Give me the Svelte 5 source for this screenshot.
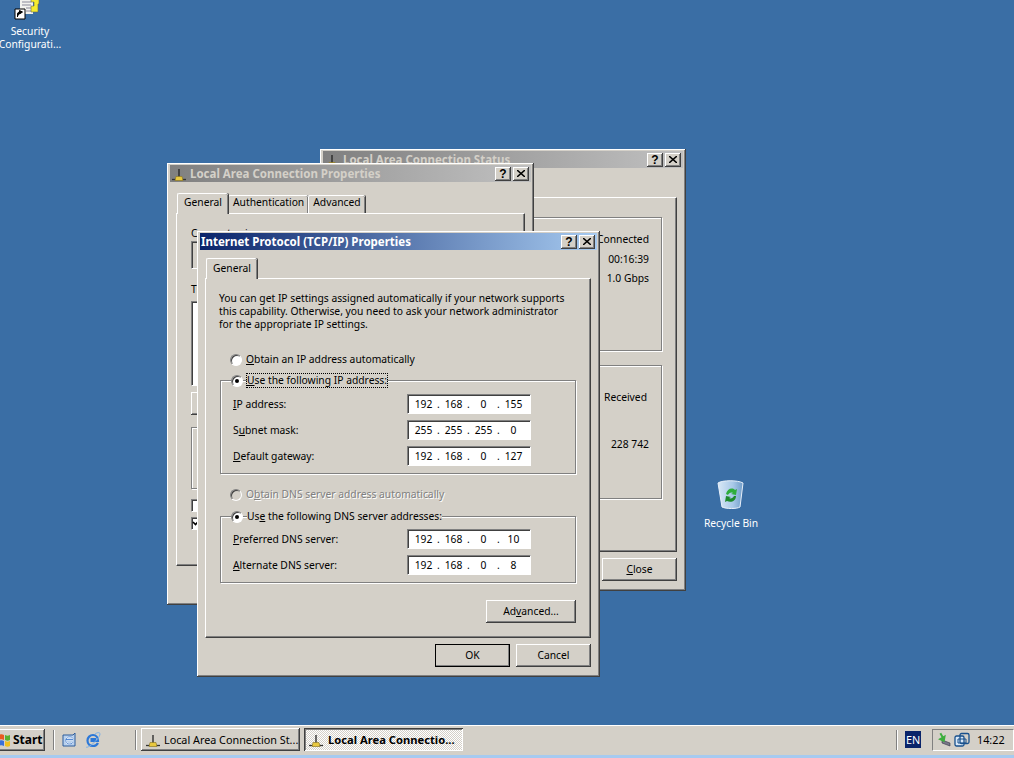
<script>
	const ipGroup = [
		{ key: 'I', rest: 'P address:', parts: ['192', '168', '0', '155'] },
		{ before: 'S', key: 'u', rest: 'bnet mask:', parts: ['255', '255', '255', '0'] },
		{ key: 'D', rest: 'efault gateway:', parts: ['192', '168', '0', '127'] }
	];
	const dnsGroup = [
		{ key: 'P', rest: 'referred DNS server:', parts: ['192', '168', '0', '10'] },
		{ key: 'A', rest: 'lternate DNS server:', parts: ['192', '168', '0', '8'] }
	];
</script>

{#snippet netIcon()}
	<svg class="net" viewBox="0 0 16 16" width="16" height="16">
		<path d="M8 3v8" stroke="#222" stroke-width="1.300" />
		<path d="M1 13.500h14" stroke="#333" stroke-width="1.300" />
		<path d="M5 10.500h6l1 4H4z" fill="#e8c840" stroke="#8a7420" stroke-width=".6" />
	</svg>
{/snippet}

{#snippet controls()}
	<div class="controls">
		<span class="ctl">?</span>
		<span class="ctl close">
			<svg viewBox="0 0 8 7" width="8" height="7"><path d="M0 0l8 7M8 0L0 7" stroke="#000" stroke-width="1.500" /></svg>
		</span>
	</div>
{/snippet}

{#snippet radio(checked, disabled)}
	<span class="radio" class:disabled>
		{#if checked}<span class="dot"></span>{/if}
	</span>
{/snippet}

{#snippet ipRows(rows)}
	{#each rows as row}
		<div class="ip-row">
			<span class="ip-label">{row.before ?? ''}<u>{row.key}</u>{row.rest}</span>
			<div class="ip-field">
				{#each row.parts as part, i}
					<span class="octet">{part}</span>{#if i < 3}<span class="sep">.</span>{/if}
				{/each}
			</div>
		</div>
	{/each}
{/snippet}

<div class="screen">
	<div class="desktop">
		<div class="desk-icon security">
			<svg viewBox="0 0 32 32" width="32" height="32">
				<path d="M6 0h13v24H6z" fill="#f2f2ee" />
				<path d="M8 12h9M8 15h9M12 18h6M12 21h6" stroke="#8a8a9a" />
				<path d="M17 6h8v8h-1v8h-7v-6h3v-4h-3z" fill="#f4ec30" stroke="#665" stroke-width=".6" />
				<path d="M1 19h10v10H1z" fill="#fff" stroke="#000" />
				<path d="M3.500 27v-3c0-1.500 1-2 3-2M5.500 20.500l3 1.500-3 2z" fill="#000" stroke="#000" />
			</svg>
			<span>Security<br />Configurati...</span>
		</div>

		<div class="desk-icon recycle">
			<svg viewBox="0 0 32 32" width="32" height="32">
				<defs>
					<linearGradient id="binGrad" x1="0" x2="1">
						<stop offset="0" stop-color="#d8e8f6" />
						<stop offset=".6" stop-color="#a8c8e8" />
						<stop offset="1" stop-color="#6f9cc8" />
					</linearGradient>
				</defs>
				<path d="M3 4c4-3 20-3 25 0l-3 24c-3 2-14 2-18 0z" fill="url(#binGrad)" stroke="#e8f0fa" />
				<path d="M11 15c1-5 6-7 9-4l2-1-1 6-5-1 2-1c-2-1-4 0-5 2z" fill="#2fae3c" />
				<path d="M21 17c0 5-5 7-9 5l-2 1 1-6 5 1-2 1c2 1 4 0 5-2z" fill="#1e8a2c" />
			</svg>
			<span>Recycle Bin</span>
		</div>

		<!-- status dialog, mostly covered -->
		<section class="window status">
			<header class="title inactive">
				{@render netIcon()}
				<span class="title-text">Local Area Connection Status</span>
				{@render controls()}
			</header>
			<div class="status-body">
				<div class="panel status-panel">
					<fieldset class="etched status-group first">
						<p class="status-line">Connected</p>
						<p class="status-line">00:16:39</p>
						<p class="status-line">1.0 Gbps</p>
					</fieldset>
					<fieldset class="etched status-group second">
						<p class="received">Received</p>
						<p class="bytes">228 742</p>
					</fieldset>
				</div>
				<div class="status-foot">
					<button class="btn close-btn"><u>C</u>lose</button>
				</div>
			</div>
		</section>

		<!-- properties dialog, mostly covered -->
		<section class="window props">
			<header class="title inactive">
				{@render netIcon()}
				<span class="title-text">Local Area Connection Properties</span>
				{@render controls()}
			</header>
			<div class="props-body">
				<div class="tabs">
					<span class="tab active">General</span>
					<span class="tab">Authentication</span>
					<span class="tab">Advanced</span>
				</div>
				<div class="panel props-panel">
					<p class="props-text">Connect using:</p>
					<div class="sunken connect-box"></div>
					<p class="props-text this">This connection uses the following items:</p>
					<div class="sunken list-box"></div>
					<div class="btn stub-btn"></div>
					<div class="etched stub-group"></div>
					<div class="check"></div>
					<div class="check">
						<svg viewBox="0 0 9 9" width="9" height="9"><path d="M1 4l2.500 2.500L8 1.500" fill="none" stroke="#000" stroke-width="1.600" /></svg>
					</div>
				</div>
			</div>
		</section>

		<!-- active dialog -->
		<section class="window tcp">
			<header class="title">
				<span class="title-text">Internet Protocol (TCP/IP) Properties</span>
				{@render controls()}
			</header>
			<div class="tcp-body">
				<div class="tabs">
					<span class="tab active">General</span>
				</div>
				<div class="panel tcp-panel">
					<p class="intro">
						You can get IP settings assigned automatically if your network supports<br />
						this capability. Otherwise, you need to ask your network administrator<br />
						for the appropriate IP settings.
					</p>

					<div class="option first-option">
						{@render radio(false, false)}
						<span><u>O</u>btain an IP address automatically</span>
					</div>
					<div class="etched group ip-group">
						<div class="option legend">
							{@render radio(true, false)}
							<span class="focused"><u>U</u>se the following IP address:</span>
						</div>
						{@render ipRows(ipGroup)}
					</div>

					<div class="option dns-option disabled-text">
						{@render radio(false, true)}
						<span>O<u>b</u>tain DNS server address automatically</span>
					</div>
					<div class="etched group dns-group">
						<div class="option legend">
							{@render radio(true, false)}
							<span class="legend-text">Us<u>e</u> the following DNS server addresses:</span>
						</div>
						{@render ipRows(dnsGroup)}
					</div>

					<div class="advanced-row">
						<button class="btn advanced">Ad<u>v</u>anced...</button>
					</div>
				</div>
				<div class="foot">
					<button class="btn ok">OK</button>
					<button class="btn">Cancel</button>
				</div>
			</div>
		</section>
	</div>

	<footer class="taskbar">
		<button class="btn start">
			<svg viewBox="0 0 16 16" width="16" height="16">
				<path d="M0 3c2-1 3-1 5 0v5c-2-1-3-1-5 0z" fill="#e85a20" />
				<path d="M6 3c2 1 3 1 5 0v5c-2 1-3 1-5 0z" fill="#58b030" />
				<path d="M0 9c2-1 3-1 5 0v5c-2-1-3-1-5 0z" fill="#3a70d8" />
				<path d="M6 9c2 1 3 1 5 0v5c-2 1-3 1-5 0z" fill="#f0c020" />
			</svg>
			<b>Start</b>
		</button>
		<span class="grip first-grip"></span>
		<div class="quick">
			<svg viewBox="0 0 16 16" width="16" height="16">
				<path d="M2 3h10l2-2v13H2z" fill="#b8d0ec" stroke="#2c5c9c" />
				<path d="M12 6.500c-1-2.500-6-2.500-7 .5s1 5 3.500 5 3-1 3.500-2M5 7.500h7" fill="none" stroke="#fff" stroke-width="1.500" />
				<path d="M12 6.500c-1-2.500-6-2.500-7 .5s1 5 3.500 5 3-1 3.500-2M5 7.500h7" fill="none" stroke="#2c6cc8" stroke-width=".8" />
			</svg>
			<svg viewBox="0 0 16 16" width="16" height="16">
				<path d="M13 11c-1 2-3 3-5 3-3.500 0-5.500-2.500-5.500-5.500S5 3 8 3s5 2.500 5 6H5.500M5.500 7H11" fill="none" stroke="#2c78d8" stroke-width="2.200" />
				<path d="M1 15c1 1 4-1 7-3.500s7-7 7-9.500-4-1-5 0" fill="none" stroke="#7ab0e8" stroke-width="1" />
			</svg>
		</div>
		<span class="grip"></span>
		<button class="btn task">{@render netIcon()}<span>Local Area Connection St...</span></button>
		<button class="btn task current">{@render netIcon()}<b>Local Area Connectio...</b></button>
		<span class="spacer"></span>
		<span class="grip"></span>
		<span class="lang">EN</span>
		<div class="tray">
			<svg viewBox="0 0 16 16" width="16" height="16">
				<path d="M6 8l8 3v3l-8-3z" fill="#778" stroke="#334" stroke-width=".6" />
				<path d="M6 1v4H2l4 6 5-6H8V1z" fill="#3cae3c" transform="rotate(-30 6 6)" />
			</svg>
			<svg viewBox="0 0 16 16" width="16" height="16">
				<rect x="1" y="4" width="9" height="10" rx="1.500" fill="#d8e8f8" stroke="#18508c" stroke-width="1.300" />
				<rect x="6" y="1.500" width="9" height="10" rx="1.500" fill="none" stroke="#18508c" stroke-width="1.300" />
				<path d="M4 7h8v4H4z" fill="none" stroke="#18508c" />
			</svg>
			<span class="clock">14:22</span>
		</div>
	</footer>
</div>

<style>
	:global(body) {
		margin: 0;
		overflow: hidden;
	}

	.screen {
		display: flex;
		flex-direction: column;
		width: 1014px;
		height: 758px;
		overflow: hidden;
		color: #000;
		font: 10.3px/13px 'Noto Sans', 'Open Sans', sans-serif;
		background: #3a6ea5;
	}

	p {
		margin: 0;
	}

	u {
		text-underline-offset: 1px;
	}

	.desktop {
		position: relative;
		flex: 1;
	}

	.desk-icon {
		position: absolute;
		display: flex;
		flex-direction: column;
		align-items: center;
		color: #fff;
		text-align: center;
	}

	.security {
		top: -10px;
		left: -12px;
		width: 84px;
	}

	.security span {
		margin-top: 3px;
	}

	.recycle {
		top: 479px;
		left: 693px;
		width: 76px;
	}

	.recycle span {
		margin-top: 6px;
	}

	.window {
		position: absolute;
		box-sizing: border-box;
		display: flex;
		flex-direction: column;
		padding: 2px 3px 3px;
		background: #d4d0c8;
		box-shadow: inset -1px -1px #404040, inset 1px 1px #fff, inset -2px -2px #808080, inset 2px 2px #d4d0c8;
	}

	.status {
		top: 149px;
		left: 320px;
		width: 366px;
		height: 442px;
	}

	.props {
		top: 163px;
		left: 167px;
		width: 367px;
		height: 442px;
	}

	.tcp {
		top: 231px;
		left: 197px;
		width: 403px;
		height: 446px;
	}

	.title {
		display: flex;
		flex: none;
		align-items: center;
		gap: 3px;
		height: 17px;
		padding: 0 2px 0 1px;
		color: #fff;
		font-size: 11.5px;
		font-weight: 700;
		background: linear-gradient(90deg, #0a246a, #a6caf0);
	}

	.title.inactive {
		color: #d4d0c8;
		background: linear-gradient(90deg, #808080, #c0c0c0);
	}

	.title-text {
		flex: 1;
		padding-bottom: 1px;
		white-space: nowrap;
	}

	.controls {
		display: flex;
		gap: 2px;
	}

	.ctl {
		display: flex;
		align-items: center;
		justify-content: center;
		width: 16px;
		height: 14px;
		color: #000;
		font: 700 12px/14px 'Liberation Sans', sans-serif;
		background: #d4d0c8;
		box-shadow: inset -1px -1px #404040, inset 1px 1px #fff, inset -2px -2px #808080;
	}

	.net {
		flex: none;
	}

	.tabs {
		display: flex;
		align-items: flex-end;
		height: 20px;
		padding-left: 1px;
	}

	.tab {
		position: relative;
		box-sizing: border-box;
		padding: 0 4px;
		height: 18px;
		border: solid #fff;
		border-width: 1px 0 0 1px;
		border-radius: 2px 2px 0 0;
		box-shadow: inset -1px 0 #808080, 1px 0 #404040;
		white-space: nowrap;
	}

	.tab.active {
		z-index: 1;
		margin-bottom: -1px;
		padding: 3px 6px 0;
		height: 21px;
		background: #d4d0c8;
	}

	.props .tab.active {
		padding-top: 2px;
	}

	.panel {
		box-sizing: border-box;
		border: 1px solid;
		border-color: #fff #404040 #404040 #fff;
		box-shadow: inset -1px -1px #808080;
	}

	.etched {
		margin: 0;
		padding: 0;
		border: 1px solid #808080;
		box-shadow: 1px 1px #fff, inset 1px 1px #fff;
	}

	.btn {
		box-sizing: border-box;
		margin: 0;
		padding: 0;
		width: 75px;
		height: 23px;
		border: 0;
		color: #000;
		font: inherit;
		background: #d4d0c8;
		box-shadow: inset -1px -1px #404040, inset 1px 1px #fff, inset -2px -2px #808080;
	}

	/* status window */
	.status-body {
		display: flex;
		flex-direction: column;
		flex: 1;
		padding: 29px 6px 0;
	}

	.status-panel {
		display: flex;
		flex-direction: column;
		gap: 14px;
		height: 355px;
		padding: 19px 14px 0 0;
		align-items: flex-end;
	}

	.status-group {
		box-sizing: border-box;
		width: 330px;
		height: 134px;
		text-align: right;
	}

	.status-line {
		padding-right: 12px;
		height: 19.500px;
		line-height: 14px;
	}

	.first {
		padding-top: 14px;
	}

	.second {
		padding-top: 25px;
	}

	.received {
		padding-right: 14px;
	}

	.bytes {
		margin-top: 34px;
		padding-right: 12px;
	}

	.status-foot {
		display: flex;
		justify-content: flex-end;
		margin-top: 6px;
	}

	/* properties window */
	.props-body {
		display: flex;
		flex-direction: column;
		flex: 1;
		padding: 11px 6px 0;
	}

	.props-panel {
		height: 353px;
		padding: 13px 9px 0 14px;
	}

	.props-text {
		height: 13px;
	}

	.sunken {
		box-sizing: border-box;
		border: 1px solid;
		border-color: #808080 #fff #fff #808080;
		box-shadow: inset 1px 1px #404040;
		background: #fff;
	}

	.connect-box {
		margin-top: 1px;
		height: 28px;
		background: #d4d0c8;
	}

	.this {
		margin-top: 14px;
	}

	.list-box {
		margin-top: 5px;
		height: 85px;
	}

	.stub-btn {
		margin-top: 6px;
		height: 23px;
	}

	.stub-group {
		margin: 12px 0 10px;
		height: 60px;
	}

	.check {
		box-sizing: border-box;
		display: flex;
		margin-bottom: 5px;
		width: 13px;
		height: 13px;
		border: 1px solid;
		border-color: #808080 #fff #fff #808080;
		box-shadow: inset 1px 1px #404040;
		background: #fff;
	}

	/* tcp window */
	.tcp-body {
		display: flex;
		flex-direction: column;
		flex: 1;
		padding: 8px 6px 0 5px;
	}

	.tcp-panel {
		display: flex;
		flex-direction: column;
		height: 360px;
		padding: 0 14px;
	}

	.intro {
		margin: 13px 0 0 -1px;
		white-space: nowrap;
	}

	.option {
		display: flex;
		align-items: center;
		gap: 4px;
		height: 15px;
		padding-left: 10px;
		white-space: nowrap;
	}

	.first-option {
		margin-top: 21px;
	}

	.radio {
		position: relative;
		box-sizing: border-box;
		display: flex;
		flex: none;
		align-items: center;
		justify-content: center;
		width: 12px;
		height: 12px;
		border: 1px solid;
		border-color: #808080 #fff #fff #808080;
		border-radius: 50%;
		box-shadow: inset 1px 1px #404040;
		background: #fff;
	}

	.radio.disabled {
		background: #d4d0c8;
	}

	.dot {
		width: 4px;
		height: 4px;
		border-radius: 50%;
		background: #000;
	}

	.group {
		position: relative;
		box-sizing: border-box;
	}

	.ip-group {
		margin-top: 13px;
		height: 94px;
		padding-top: 10px;
	}

	.dns-group {
		margin-top: 14px;
		height: 67px;
		padding-top: 9px;
	}

	.legend {
		position: absolute;
		top: -8px;
		left: 0;
	}

	.focused {
		outline: 1px dotted #000;
		background: #d4d0c8;
	}

	.legend-text {
		background: #d4d0c8;
	}

	.dns-option {
		margin-top: 13px;
	}

	.disabled-text {
		color: #808080;
		text-shadow: 1px 1px #fff;
	}

	.ip-row {
		display: flex;
		align-items: center;
		justify-content: space-between;
		height: 26px;
		padding: 0 44px 0 12px;
	}

	.ip-field {
		box-sizing: border-box;
		display: flex;
		align-items: center;
		width: 124px;
		height: 20px;
		padding-left: 3px;
		border: 1px solid;
		border-color: #808080 #fff #fff #808080;
		box-shadow: inset 1px 1px #404040;
		background: #fff;
	}

	.octet {
		width: 25px;
		text-align: center;
	}

	.sep {
		width: 5px;
		text-align: center;
	}

	.advanced-row {
		display: flex;
		justify-content: flex-end;
		margin-top: 17px;
	}

	.advanced {
		width: 90px;
		height: 23px;
	}

	.foot {
		display: flex;
		justify-content: flex-end;
		gap: 6px;
		margin-top: 6px;
	}

	.ok {
		outline: 1px solid #000;
		outline-offset: -1px;
	}

	/* taskbar */
	.taskbar {
		display: flex;
		flex: none;
		align-items: center;
		height: 33px;
		box-sizing: border-box;
		padding-bottom: 5px;
		border-top: 1px solid #fff;
		font-size: 10.8px;
		background: linear-gradient(#d4d0c8 29px, #a6caf0 29px);
	}

	.start {
		display: flex;
		align-items: center;
		margin-left: -4px;
		padding-left: 3px;
		width: 49px;
		height: 22px;
		font-size: 12px;
	}

	.start svg {
		margin-right: -2px;
	}

	.grip {
		flex: none;
		width: 1px;
		height: 20px;
		margin-left: 6px;
		background: #808080;
		box-shadow: 1px 0 #fff;
	}

	.first-grip {
		margin-left: 8px;
	}

	.quick {
		display: flex;
		gap: 8px;
		width: 75px;
		padding-left: 7px;
		box-sizing: border-box;
	}

	.task {
		display: flex;
		align-items: center;
		gap: 3px;
		margin-left: 5px;
		padding-left: 4px;
		width: 159px;
		height: 23px;
		white-space: nowrap;
		overflow: hidden;
	}

	.task.current {
		margin-left: 4px;
		gap: 4px;
		font-size: 11.200px;
		box-shadow: inset 1px 1px #404040, inset -1px -1px #fff, inset 2px 2px #808080;
		background: repeating-conic-gradient(#fff 0 25%, #d4d0c8 0 50%) 0 0 / 2px 2px;
	}

	.spacer {
		flex: 1;
	}

	.lang {
		margin-left: 8px;
		width: 16px;
		height: 17px;
		color: #fff;
		line-height: 17px;
		text-align: center;
		background: #0a246a;
	}

	.tray {
		display: flex;
		align-items: center;
		gap: 2px;
		box-sizing: border-box;
		margin-left: 11px;
		padding-left: 3px;
		width: 82px;
		height: 22px;
		border: 1px solid;
		border-color: #808080 #fff #fff #808080;
	}

	.clock {
		margin-left: 5px;
	}
</style>
